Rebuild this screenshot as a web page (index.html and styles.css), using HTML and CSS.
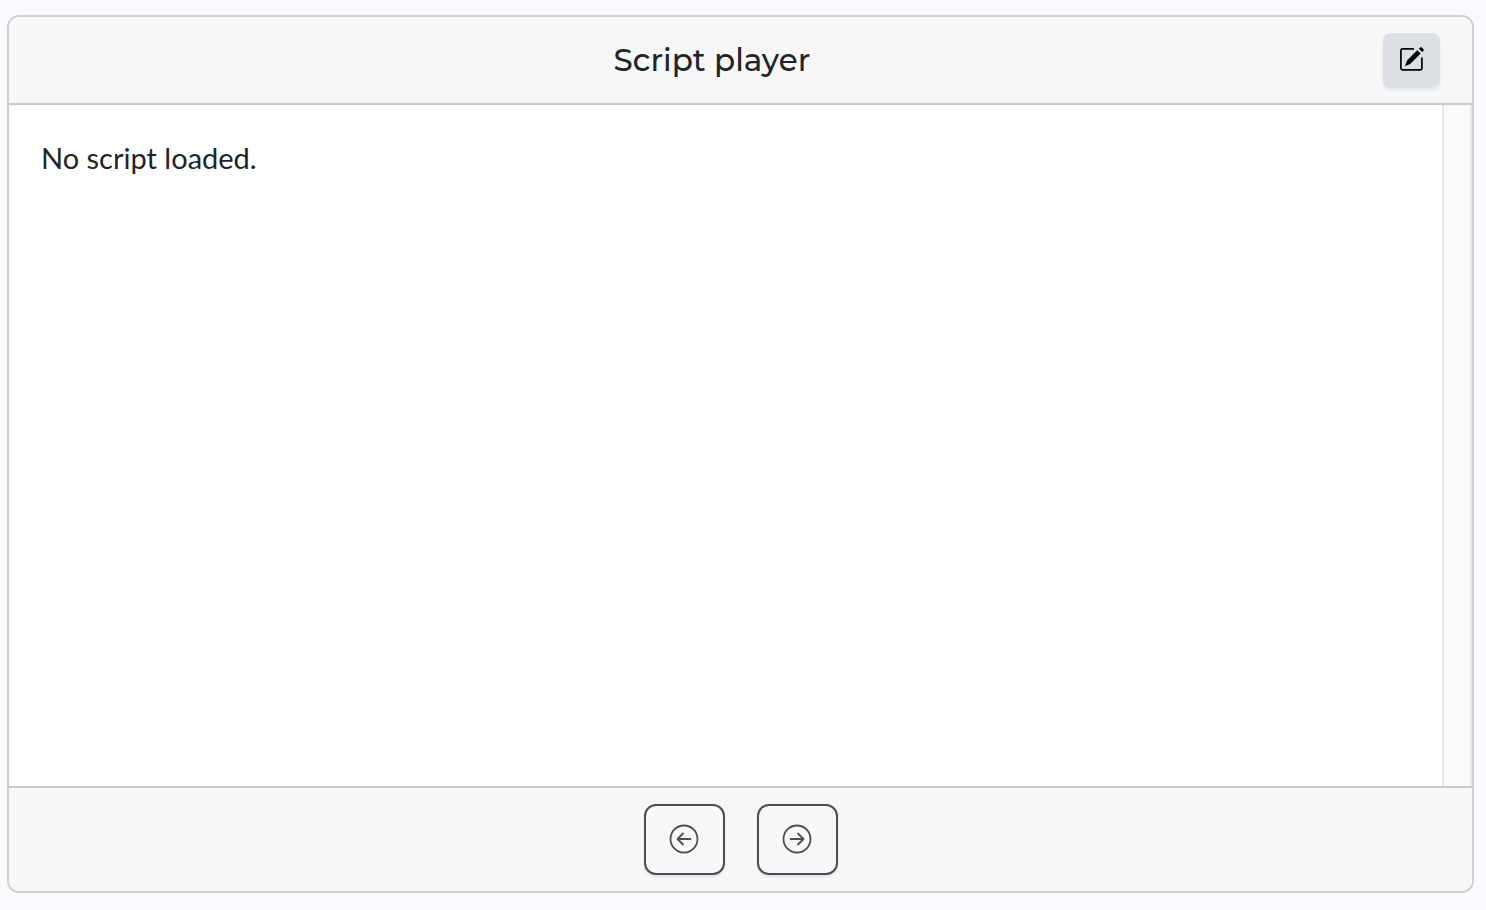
FILE: index.html
```
<!DOCTYPE html>
<html lang="en">
<head>
<meta charset="utf-8">
<title>Script player</title>
<link rel="stylesheet" href="styles.css">
</head>
<body>
<main class="card">
  <header class="card-header">
    <h1 class="title">Script player</h1>
    <button class="btn btn-edit" type="button" aria-label="Edit script">
      <svg class="icon-edit" viewBox="0 0 26 26" aria-hidden="true">
        <path d="M14.300 2.900H3.500Q1.900 2.900 1.900 4.500V22.300Q1.900 23.900 3.500 23.900H21.300Q22.900 23.900 22.900 22.300V12" fill="none" stroke="#000" stroke-width="1.700" stroke-linecap="round"/>
        <path d="M18.300 4.200 21.600 7.500 11 18 6.200 20 8.100 14.400ZM20 2.700 21.300 1.400Q22 .9 22.600 1.500L24.500 3.300Q25 4 24.500 4.600L23.200 5.900Z" stroke="#000" stroke-width=".2" stroke-linejoin="round"/>
      </svg>
    </button>
  </header>
  <div class="card-body">
    <p class="message">No script loaded.</p>
    <div class="scroll-track"></div>
  </div>
  <footer class="card-footer">
    <button class="btn btn-outline" type="button" aria-label="Previous">
      <svg class="icon-arrow" viewBox="0 0 30 30" aria-hidden="true">
        <circle cx="15" cy="15" r="13.500"/>
        <path d="M21.500 15H8.500M14 9.500 8.500 15 14 20.500"/>
      </svg>
    </button>
    <button class="btn btn-outline" type="button" aria-label="Next">
      <svg class="icon-arrow" viewBox="0 0 30 30" aria-hidden="true">
        <circle cx="15" cy="15" r="13.500"/>
        <path d="M8.500 15H21.500M16 9.500 21.500 15 16 20.500"/>
      </svg>
    </button>
  </footer>
</main>
</body>
</html>
```
FILE: styles.css
```
* {
  box-sizing: border-box;
}

body {
  margin: 0;
  min-height: 100vh;
  padding: 15px 12px 17px 7px;
  display: flex;
  background: #f9fafe;
  color: #212529;
  font-family: Lato, sans-serif;
}

.card {
  flex: 1;
  display: flex;
  flex-direction: column;
  border: 2px solid #cfcfcf;
  border-radius: 12px;
  background: #fff;
  overflow: hidden;
}

.card-header {
  display: flex;
  align-items: center;
  padding: 16px 32px 15px;
  background: #f7f7f7;
  border-bottom: 2px solid #c9c9c9;
}

.title {
  flex: 1;
  margin: 0;
  padding-bottom: 2px;
  text-align: center;
  font-family: Montserrat, Inter, sans-serif;
  font-size: 31px;
  font-weight: 500;
  line-height: 38px;
}

.btn {
  display: flex;
  align-items: center;
  justify-content: center;
  padding: 0 0 2px;
  border: 0;
  cursor: pointer;
}

.btn-edit {
  width: 57px;
  height: 55px;
  padding-bottom: 3px;
  border-radius: 8px;
  background: #dce0e5;
  box-shadow: 0 2px 3px rgba(0, 0, 0, 0.08);
}

.icon-edit {
  width: 26px;
  height: 26px;
}

.card-body {
  flex: 1;
  display: flex;
}

.message {
  flex: 1;
  margin: 0;
  padding: 32px;
  font-size: 29px;
  line-height: 42px;
}

.scroll-track {
  width: 30px;
  background: #fafafa;
  border: solid #e8e8e8;
  border-width: 0 2px;
}

.card-footer {
  display: flex;
  justify-content: center;
  gap: 32px;
  padding: 16px 32px;
  background: #f7f7f7;
  border-top: 2px solid #c9c9c9;
}

.btn-outline {
  width: 81px;
  height: 71px;
  border: 2px solid #484d56;
  border-radius: 12px;
  background: #f8f8f8;
  box-shadow: 0 2px 2px rgba(0, 0, 0, 0.08);
}

.icon-arrow {
  width: 30px;
  height: 30px;
  fill: none;
  stroke: #495057;
  stroke-width: 1.8;
  stroke-linecap: round;
  stroke-linejoin: round;
}
```
